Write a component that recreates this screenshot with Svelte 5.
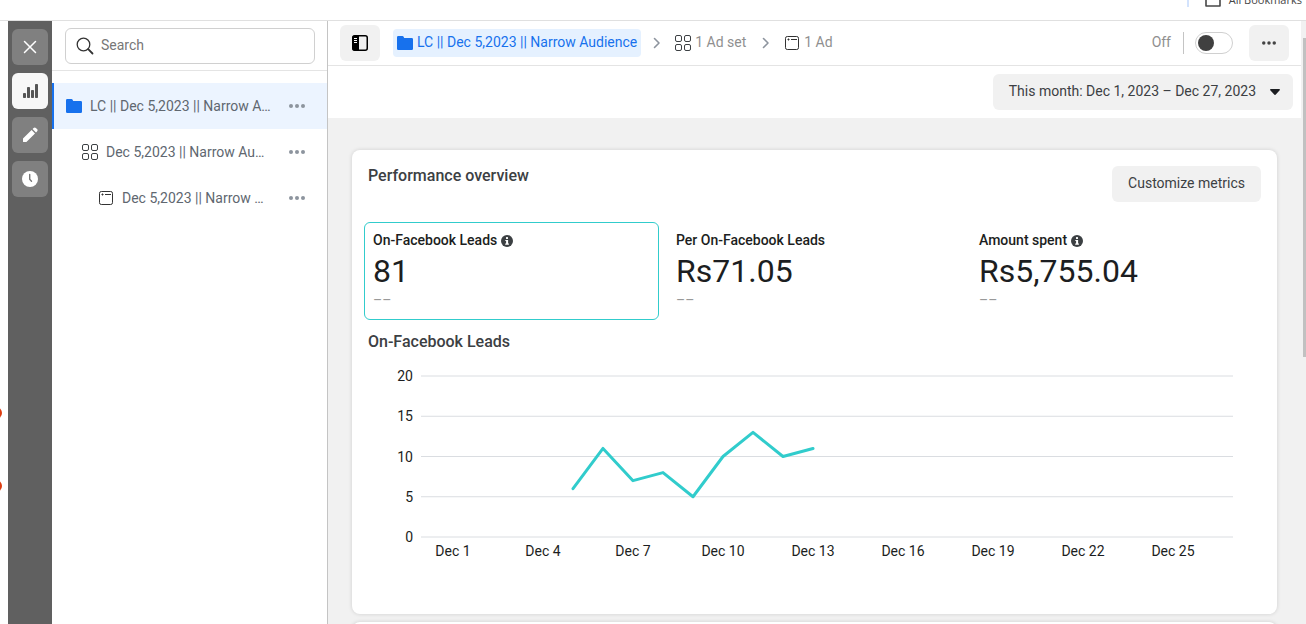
<script lang="ts">
	interface TreeItem {
		icon: string;
		label: string;
		level: number;
	}

	interface Metric {
		label: string;
		value: string;
		info: boolean;
	}

	const tools = [
		{ icon: 'close', label: 'Close' },
		{ icon: 'chart', label: 'View charts' },
		{ icon: 'pencil', label: 'Edit' },
		{ icon: 'clock', label: 'History' }
	];

	const tree: TreeItem[] = [
		{ icon: 'folder', label: 'LC || Dec 5,2023 || Narrow Audience', level: 0 },
		{ icon: 'grid', label: 'Dec 5,2023 || Narrow Audience', level: 1 },
		{ icon: 'ad', label: 'Dec 5,2023 || Narrow Audience', level: 2 }
	];

	const metrics: Metric[] = [
		{ label: 'On-Facebook Leads', value: '81', info: true },
		{ label: 'Per On-Facebook Leads', value: 'Rs71.05', info: false },
		{ label: 'Amount spent', value: 'Rs5,755.04', info: true }
	];

	const leads = [
		{ day: 5, count: 6 },
		{ day: 6, count: 11 },
		{ day: 7, count: 7 },
		{ day: 8, count: 8 },
		{ day: 9, count: 5 },
		{ day: 10, count: 10 },
		{ day: 11, count: 13 },
		{ day: 12, count: 10 },
		{ day: 13, count: 11 }
	];

	const yTicks = [20, 15, 10, 5, 0];
	const xTicks = [1, 4, 7, 10, 13, 16, 19, 22, 25];

	// plot size in viewBox units
	const plotWidth = 812;
	const plotHeight = 161;

	const toX = (day: number) => 2 + day * 30;
	const toY = (count: number) => plotHeight - (count / 20) * plotHeight;

	let activeTool = $state('chart');
	let selectedItem = $state(0);
	let selectedMetric = $state(0);
	let enabled = $state(false);
	let search = $state('');

	let line = $derived(leads.map((p) => `${toX(p.day)},${toY(p.count)}`).join(' '));
</script>

{#snippet icon(name: string)}
	{#if name === 'close'}
		<svg class="icon" viewBox="0 0 16 16" width="16" height="16" aria-hidden="true">
			<path d="M2.5 2.5l11 11M13.5 2.5l-11 11" fill="none" stroke="#fff" stroke-width="1.5" stroke-linecap="round" />
		</svg>
	{:else if name === 'chart'}
		<svg class="icon" viewBox="0 0 16 16" width="16" height="16" aria-hidden="true">
			<g fill="#555">
				<rect x="1" y="10" width="3" height="5" rx="0.8" />
				<rect x="5" y="4" width="3" height="11" rx="0.8" />
				<rect x="9" y="7" width="3" height="8" rx="0.8" />
				<rect x="13" y="1" width="3" height="14" rx="0.8" />
			</g>
		</svg>
	{:else if name === 'pencil'}
		<svg class="icon" viewBox="0 0 16 16" width="16" height="16" aria-hidden="true">
			<path d="M1 11.6L9.6 3l3.4 3.4L4.4 15H1.6a.6.6 0 0 1-.6-.6zM10.6 2l1-1a1.6 1.6 0 0 1 2.3 0l1.1 1.1a1.6 1.6 0 0 1 0 2.3l-1 1z" fill="#fff" />
		</svg>
	{:else if name === 'clock'}
		<svg class="icon" viewBox="0 0 16 16" width="16" height="16" aria-hidden="true">
			<circle cx="8" cy="8" r="8" fill="#fff" />
			<path d="M7.7 3.5v4.8l1.8 1.9" fill="none" stroke="#777" stroke-width="1.4" stroke-linecap="round" />
		</svg>
	{:else if name === 'folder'}
		<svg class="icon" viewBox="0 0 16 16" width="16" height="16" aria-hidden="true">
			<path d="M0 2.2A1.2 1.2 0 0 1 1.2 1h4.3c.5 0 .9.3 1.1.7L7.2 3h7.6A1.2 1.2 0 0 1 16 4.2v9.6a1.2 1.2 0 0 1-1.2 1.2H1.2A1.2 1.2 0 0 1 0 13.8z" fill="#1771ed" />
		</svg>
	{:else if name === 'grid'}
		<svg class="icon" viewBox="0 0 16 16" width="16" height="16" aria-hidden="true">
			<g fill="none" stroke="#3c4043">
				<rect x="0.5" y="0.5" width="6" height="6" rx="1.5" />
				<rect x="9.5" y="0.5" width="6" height="6" rx="1.5" />
				<rect x="0.5" y="9.5" width="6" height="6" rx="1.5" />
				<rect x="9.5" y="9.5" width="6" height="6" rx="1.5" />
			</g>
		</svg>
	{:else if name === 'ad'}
		<svg class="icon" viewBox="0 0 16 16" width="16" height="16" aria-hidden="true">
			<rect x="1.5" y="1.5" width="13" height="13" rx="1.8" fill="none" stroke="#333" />
			<path d="M3.5 4.5h2M4.5 3.5v2M7 4.5h6" fill="none" stroke="#333" />
		</svg>
	{:else if name === 'search'}
		<svg class="icon" viewBox="0 0 18 18" width="18" height="18" aria-hidden="true">
			<circle cx="7.5" cy="7.5" r="6.3" fill="none" stroke="#333" stroke-width="1.3" />
			<path d="M12.2 12.2l4.3 4.3" fill="none" stroke="#333" stroke-width="1.8" stroke-linecap="round" />
		</svg>
	{:else if name === 'panel'}
		<svg class="icon" viewBox="0 0 16 16" width="16" height="16" aria-hidden="true">
			<rect x="0.75" y="0.75" width="14.5" height="14.5" rx="2" fill="#f1f1f1" stroke="#000" stroke-width="1.5" />
			<path d="M2 .5h5v15H2A1.5 1.5 0 0 1 .5 14V2A1.5 1.5 0 0 1 2 .5z" fill="#000" />
			<path d="M2 3.5h3M2 5.5h3M2 7.5h3" stroke="#fff" fill="none" />
		</svg>
	{:else if name === 'chevron'}
		<svg class="icon chevron" viewBox="0 0 6 12" width="6" height="12" aria-hidden="true">
			<path d="M1.5 1.5L6 6l-4.5 4.5" fill="none" stroke="#8d949e" stroke-width="1.6" stroke-linecap="round" stroke-linejoin="round" />
		</svg>
	{:else if name === 'dots'}
		<svg class="icon" viewBox="0 0 16 4" width="16" height="4" aria-hidden="true">
			<g fill="currentColor">
				<circle cx="2" cy="2" r="2" />
				<circle cx="8" cy="2" r="2" />
				<circle cx="14" cy="2" r="2" />
			</g>
		</svg>
	{:else if name === 'caret'}
		<svg class="icon" viewBox="0 0 10 6" width="10" height="6" aria-hidden="true">
			<path d="M.8 0h8.4c.7 0 1 .8.5 1.3L5.800 5.600a1.100 1.100 0 0 1-1.600 0L.3 1.300C-.2.8.1 0 .8 0z" fill="#1c1e21" />
		</svg>
	{:else if name === 'info'}
		<svg class="icon" viewBox="0 0 12 12" width="12" height="12" aria-hidden="true">
			<circle cx="6" cy="6" r="6" fill="#3c4043" />
			<rect x="5" y="2" width="2" height="2" rx="0.5" fill="#fff" />
			<path d="M4.3 5h2.800v3.600h.8v1.100H4.200V8.600h.9V6h-.8z" fill="#fff" />
		</svg>
	{:else if name === 'bookmarks'}
		<svg class="icon" viewBox="0 0 16 14" width="16" height="14" aria-hidden="true">
			<path d="M1 1h5l2 2h7v10H1z" fill="none" stroke="#474747" stroke-width="1.6" stroke-linejoin="round" />
		</svg>
	{/if}
{/snippet}

<div class="page">
	<div class="bookmarks-bar">
		<span class="bar-divider"></span>
		<a class="all-bookmarks" href="#bookmarks">
			{@render icon('bookmarks')}
			All Bookmarks
		</a>
	</div>

	<div class="workspace">
		<div class="gutter">
			<span class="badge badge-top"></span>
			<span class="badge badge-bottom"></span>
		</div>

		<nav class="rail" aria-label="Tools">
			{#each tools as tool}
				<button
					type="button"
					class="tool"
					class:active={activeTool === tool.icon}
					aria-label={tool.label}
					onclick={() => (activeTool = tool.icon)}
				>
					{@render icon(tool.icon)}
				</button>
			{/each}
		</nav>

		<aside class="sidebar">
			<div class="search-area">
				<label class="search-box">
					{@render icon('search')}
					<input type="text" aria-label="Search" placeholder="Search" bind:value={search} />
				</label>
			</div>
			<ul class="tree">
				{#each tree as item, i}
					<li class="tree-row level-{item.level}" class:selected={selectedItem === i}>
						<button type="button" class="tree-item" onclick={() => (selectedItem = i)}>
							{@render icon(item.icon)}
							<span class="tree-label">{item.label}</span>
						</button>
						<button type="button" class="row-menu" aria-label="More actions">
							{@render icon('dots')}
						</button>
					</li>
				{/each}
			</ul>
		</aside>

		<main class="main">
			<header class="header">
				<button type="button" class="square-button" aria-label="Toggle side panel">
					{@render icon('panel')}
				</button>
				<nav class="breadcrumbs" aria-label="Breadcrumb">
					<a class="crumb current" href="#campaign">
						{@render icon('folder')}
						<span class="text">LC || Dec 5,2023 || Narrow Audience</span>
					</a>
					{@render icon('chevron')}
					<a class="crumb" href="#adset">
						{@render icon('grid')}
						<span class="text">1 Ad set</span>
					</a>
					{@render icon('chevron')}
					<a class="crumb" href="#ad">
						{@render icon('ad')}
						<span class="text">1 Ad</span>
					</a>
				</nav>
				<label class="status text" for="status">{enabled ? 'On' : 'Off'}</label>
				<span class="status-divider"></span>
				<input id="status" class="switch" type="checkbox" role="switch" bind:checked={enabled} />
				<button type="button" class="square-button more" aria-label="More options">
					{@render icon('dots')}
				</button>
			</header>

			<div class="date-bar">
				<button type="button" class="gray-button date-button">
					<span class="text">This month: Dec 1, 2023 – Dec 27, 2023</span>
					{@render icon('caret')}
				</button>
			</div>

			<div class="content">
				<section class="card">
					<div class="card-header">
						<h2 class="title">Performance overview</h2>
						<button type="button" class="gray-button">
							<span class="text">Customize metrics</span>
						</button>
					</div>

					<div class="metrics">
						{#each metrics as metric, i}
							<button
								type="button"
								class="metric"
								class:selected={selectedMetric === i}
								onclick={() => (selectedMetric = i)}
							>
								<span class="metric-label">
									<span class="text">{metric.label}</span>
									{#if metric.info}
										{@render icon('info')}
									{/if}
								</span>
								<span class="metric-value">{metric.value}</span>
								<span class="metric-change">––</span>
							</button>
						{/each}
					</div>

					<h2 class="title chart-title">On-Facebook Leads</h2>
					<div class="chart">
						<div class="y-axis">
							{#each yTicks as tick}
								<span>{tick}</span>
							{/each}
						</div>
						<svg class="plot" viewBox="0 0 {plotWidth} {plotHeight}" preserveAspectRatio="none" role="img" aria-label="On-Facebook Leads by day">
							{#each yTicks as tick}
								<line class="grid-line" x1="0" x2={plotWidth} y1={toY(tick)} y2={toY(tick)} />
							{/each}
							<polyline class="series" points={line} />
						</svg>
					</div>
					<div class="x-axis">
						{#each xTicks as day}
							<span>Dec {day}</span>
						{/each}
					</div>
				</section>

				<section class="card next-card"></section>
			</div>
		</main>

		<div class="scrollbar">
			<div class="thumb"></div>
		</div>
	</div>
</div>

<style>
	:global(body) {
		margin: 0;
		background: #fff;
	}

	.page {
		display: flex;
		flex-direction: column;
		height: 100vh;
		overflow: hidden;
		font-family: Roboto, "Liberation Sans", sans-serif;
		font-size: 14px;
		line-height: 20px;
		color: #3c4043;
	}

	.page * {
		box-sizing: border-box;
	}

	button {
		padding: 0;
		border: none;
		background: none;
		font: inherit;
		color: inherit;
		text-align: left;
		cursor: pointer;
	}

	a {
		color: inherit;
		text-decoration: none;
	}

	.icon {
		display: block;
		flex: none;
	}

	.chevron {
		overflow: visible;
	}

	/* optical centring of labels that sit beside icons */
	.text {
		padding-bottom: 2px;
	}

	.bookmarks-bar {
		display: flex;
		justify-content: flex-end;
		flex: none;
		gap: 16px;
		height: 21px;
		padding-right: 4px;
		border-bottom: 1px solid #e0e0e0;
		overflow: hidden;
	}

	.bar-divider {
		width: 2px;
		height: 7px;
		background: #d3e3fd;
	}

	.all-bookmarks {
		display: flex;
		align-items: center;
		gap: 8px;
		height: 16px;
		margin-top: -8px;
		font-family: "Open Sans", sans-serif;
		font-size: 11px;
		line-height: 16px;
		color: #474747;
	}

	.workspace {
		display: flex;
		flex: 1;
		min-height: 0;
	}

	.gutter {
		position: relative;
		flex: none;
		width: 8px;
		overflow: hidden;
	}

	.badge {
		position: absolute;
		left: -10px;
		width: 12px;
		height: 12px;
		border-radius: 50%;
		background: #dd3c10;
	}

	.badge-top {
		top: 386px;
	}

	.badge-bottom {
		top: 459px;
	}

	.rail {
		display: flex;
		flex-direction: column;
		flex: none;
		gap: 8px;
		width: 44px;
		padding: 8px 4px;
		background: #606060;
	}

	.tool {
		display: flex;
		align-items: center;
		justify-content: center;
		height: 36px;
		border-radius: 6px;
		background: #808080;
	}

	.tool.active {
		background: #f7f7f7;
	}

	.sidebar {
		flex: none;
		width: 276px;
		border-right: 1px solid #c4c4c4;
	}

	.search-area {
		padding: 7px 12px 6px 13px;
		border-bottom: 1px solid #e4e4e4;
	}

	.search-box {
		display: flex;
		align-items: center;
		gap: 7px;
		height: 36px;
		padding: 0 10px;
		border: 1px solid #d0d0d0;
		border-radius: 6px;
	}

	.search-box input {
		flex: 1;
		min-width: 0;
		padding: 0 0 2px;
		border: none;
		outline: none;
		font: inherit;
		color: inherit;
	}

	.search-box input::placeholder {
		color: #777;
		opacity: 1;
	}

	.tree {
		margin: 12px 0 0;
		padding: 0;
		list-style: none;
	}

	.tree-row {
		display: flex;
		align-items: center;
		height: 46px;
		padding-right: 22px;
		border-left: 2px solid transparent;
		color: #606770;
	}

	.tree-row.selected {
		border-left-color: #1771ed;
		background: #ecf4ff;
	}

	.level-0 {
		padding-left: 12px;
	}

	.level-1 {
		padding-left: 28px;
	}

	.level-2 {
		padding-left: 44px;
	}

	.tree-item {
		display: flex;
		align-items: center;
		flex: 1;
		gap: 8px;
		min-width: 0;
	}

	.tree-label {
		overflow: hidden;
		text-overflow: ellipsis;
		white-space: nowrap;
	}

	.level-1 .tree-label,
	.level-2 .tree-label {
		margin-right: 4px;
	}

	.row-menu {
		padding: 8px 0;
		margin-left: 16px;
		color: #8d949e;
	}

	.main {
		display: flex;
		flex-direction: column;
		flex: 1;
		min-width: 0;
		background: #f1f1f1;
	}

	.header {
		display: flex;
		align-items: center;
		flex: none;
		height: 45px;
		padding: 0 12px;
		border-bottom: 1px solid #e4e4e4;
		background: #fff;
	}

	.square-button {
		display: flex;
		align-items: center;
		justify-content: center;
		flex: none;
		width: 40px;
		height: 36px;
		border-radius: 6px;
		background: #f1f1f1;
	}

	.more {
		margin-left: 16px;
	}

	.more .icon {
		width: 14px;
		color: #444;
	}

	.breadcrumbs {
		display: flex;
		align-items: center;
		flex: 1;
		gap: 12px;
		padding-left: 13px;
		white-space: nowrap;
	}

	.crumb {
		display: flex;
		align-items: center;
		gap: 4px;
		height: 28px;
		padding: 0 4px;
		border-radius: 4px;
		color: #8f8f8f;
	}

	.crumb.current {
		background: #e5f1ff;
		color: #1771ed;
	}

	.status {
		color: #8f8f8f;
	}

	.status-divider {
		width: 1px;
		height: 22px;
		margin: 0 11px 0 12px;
		background: #c4c4c4;
	}

	.switch {
		flex: none;
		appearance: none;
		width: 38px;
		height: 22px;
		margin: 0;
		padding: 2px;
		border: 1px solid #d0d0d0;
		border-radius: 11px;
		cursor: pointer;
	}

	.switch::before {
		content: "";
		display: block;
		width: 16px;
		height: 16px;
		border-radius: 50%;
		background: #404040;
	}

	.switch:checked::before {
		margin-left: auto;
		background: #1771ed;
	}

	.date-bar {
		display: flex;
		justify-content: flex-end;
		flex: none;
		padding: 8px;
		background: #fff;
	}

	.gray-button {
		display: flex;
		align-items: center;
		height: 36px;
		padding: 0 16px;
		border-radius: 6px;
		background: #f1f1f1;
		white-space: nowrap;
	}

	.date-button {
		gap: 14px;
		padding-right: 13px;
	}

	.content {
		display: flex;
		flex-direction: column;
		flex: 1;
		gap: 8px;
		min-height: 0;
		padding: 32px 24px 0;
		overflow: hidden;
	}

	.card {
		flex: none;
		padding: 16px 12px 57px;
		border-radius: 8px;
		background: #fff;
		box-shadow: 0 0 4px rgba(0, 0, 0, 0.14);
	}

	.next-card {
		height: 120px;
	}

	.card-header {
		display: flex;
		align-items: flex-start;
		justify-content: space-between;
		padding: 0 4px;
	}

	.title {
		margin: 0;
		font-size: 16px;
		font-weight: 500;
		line-height: 20px;
	}

	.metrics {
		display: grid;
		grid-template-columns: repeat(3, 1fr);
		gap: 8px;
		margin-top: 20px;
	}

	.metric {
		display: flex;
		flex-direction: column;
		height: 98px;
		padding: 8px;
		border: 1px solid transparent;
		border-radius: 6px;
		color: #1c1e21;
	}

	.metric.selected {
		border-color: #31cccc;
	}

	.metric-label {
		display: flex;
		align-items: center;
		gap: 4px;
		height: 20px;
		font-weight: 500;
	}

	.metric-value {
		font-size: 32px;
		line-height: 40px;
	}

	.metric-change {
		line-height: 18px;
		color: #999;
	}

	.chart-title {
		margin: 12px 4px 16px;
	}

	.chart {
		display: flex;
		gap: 8px;
		padding-right: 32px;
		color: #1c1e21;
	}

	.y-axis {
		display: flex;
		flex-direction: column;
		justify-content: space-between;
		width: 49px;
		height: 177px;
		line-height: 16px;
		text-align: right;
	}

	.plot {
		flex: 1;
		min-width: 0;
		height: 161px;
		margin: 8px 0;
		overflow: visible;
	}

	.grid-line {
		stroke: #dadde1;
		stroke-width: 1px;
		vector-effect: non-scaling-stroke;
	}

	.series {
		fill: none;
		stroke: #31cccc;
		stroke-width: 3px;
		stroke-linecap: round;
		stroke-linejoin: round;
		vector-effect: non-scaling-stroke;
	}

	.x-axis {
		display: grid;
		grid-template-columns: repeat(9, 1fr);
		padding: 0 47px 0 44px;
		line-height: 12px;
		color: #1c1e21;
		text-align: center;
		white-space: nowrap;
	}

	.scrollbar {
		flex: none;
		width: 5px;
		padding: 17px 0 0 2px;
		background: #f1f1f1;
	}

	.thumb {
		height: 319px;
		background: #c1c1c1;
	}
</style>
